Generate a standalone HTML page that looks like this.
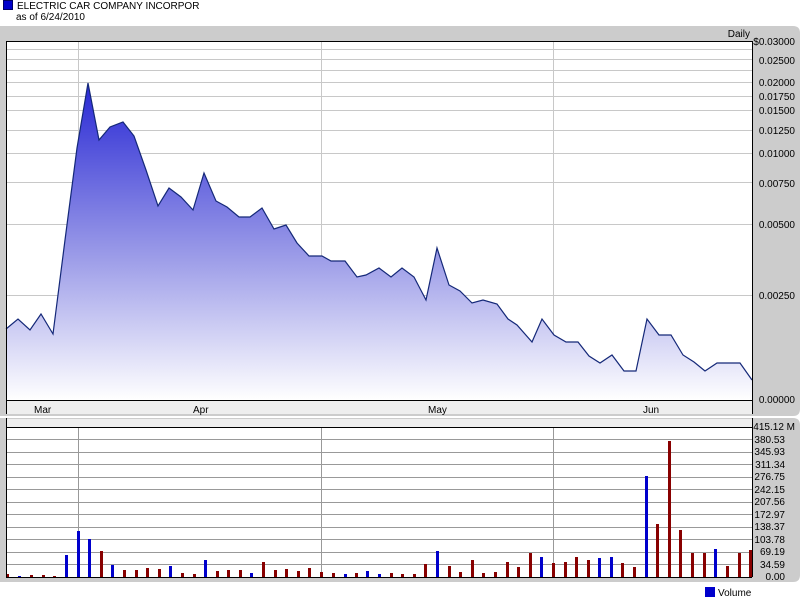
<!DOCTYPE html>
<html><head><meta charset="utf-8"><style>
html,body{margin:0;padding:0;background:#fff;width:800px;height:600px;overflow:hidden}
svg{display:block}
text{font-family:"Liberation Sans",sans-serif;font-size:10px;fill:#000}
</style></head><body>
<svg width="800" height="600" viewBox="0 0 800 600" xmlns="http://www.w3.org/2000/svg">
<defs>
<linearGradient id="g" gradientUnits="userSpaceOnUse" x1="0" y1="83" x2="0" y2="400">
<stop offset="0" stop-color="#2828d4"/>
<stop offset="0.55" stop-color="#9c9ce8"/>
<stop offset="1" stop-color="#ffffff"/>
</linearGradient>
</defs>
<!-- header -->
<rect x="3.5" y="0.5" width="9" height="9" fill="#0000cc" stroke="#000066"/>
<text x="17" y="9">ELECTRIC CAR COMPANY INCORPOR</text>
<text x="16" y="20">as of 6/24/2010</text>
<!-- price panel -->
<path d="M0 26 H793 Q800 26 800 33 V409 Q800 416 793 416 H0 Z" fill="#cccccc"/>
<rect x="6" y="41" width="746" height="359" fill="#fff"/>
<rect x="6" y="401" width="746" height="13" fill="#eeeeee"/>
<g stroke="#c8c8c8" stroke-width="1">
<line x1="6" x2="752" y1="49.5" y2="49.5"/><line x1="6" x2="752" y1="59.5" y2="59.5"/>
<line x1="6" x2="752" y1="70.5" y2="70.5"/><line x1="6" x2="752" y1="82.5" y2="82.5"/>
<line x1="6" x2="752" y1="96.5" y2="96.5"/><line x1="6" x2="752" y1="110.5" y2="110.5"/>
<line x1="6" x2="752" y1="130.5" y2="130.5"/><line x1="6" x2="752" y1="153.5" y2="153.5"/>
<line x1="6" x2="752" y1="182.5" y2="182.5"/><line x1="6" x2="752" y1="224.5" y2="224.5"/>
<line x1="6" x2="752" y1="295.5" y2="295.5"/>
<line x1="78.5" x2="78.5" y1="41" y2="400"/><line x1="321.5" x2="321.5" y1="41" y2="400"/><line x1="553.5" x2="553.5" y1="41" y2="400"/>
</g>
<path d="M6 400 L6 329 L18 319 L30 330 L41 314 L53 334 L65 240 L77 148 L88 83 L99 140 L110 127 L123 122 L134 136 L146 170 L158 206 L169 188 L181 197 L193 210 L204 173 L216 201 L227 207 L239 217 L250 217 L262 208 L274 229 L286 225 L297 243 L309 256 L322 256 L331 261 L345 261 L357 277 L366 275 L379 268 L391 277 L402 268 L414 277 L426 300 L437 248 L449 285 L460 291 L472 303 L483 300 L497 304 L508 319 L517 325 L532 342 L542 319 L554 335 L566 342 L578 342 L589 356 L600 363 L612 355 L624 371 L636 371 L647 319 L659 335 L671 335 L683 355 L694 362 L705 371 L717 363 L740 363 L752 380 L752 400 Z" fill="url(#g)"/>
<polyline fill="none" stroke="#142878" stroke-width="1.2" points="6,329 18,319 30,330 41,314 53,334 65,240 77,148 88,83 99,140 110,127 123,122 134,136 146,170 158,206 169,188 181,197 193,210 204,173 216,201 227,207 239,217 250,217 262,208 274,229 286,225 297,243 309,256 322,256 331,261 345,261 357,277 366,275 379,268 391,277 402,268 414,277 426,300 437,248 449,285 460,291 472,303 483,300 497,304 508,319 517,325 532,342 542,319 554,335 566,342 578,342 589,356 600,363 612,355 624,371 636,371 647,319 659,335 671,335 683,355 694,362 705,371 717,363 740,363 752,380"/>
<path d="M6.5 41 V414 M6 41.5 H752.5 V414 M6 400.5 H752" stroke="#000" fill="none"/>
<text x="750" y="37" text-anchor="end">Daily</text>
<g text-anchor="end">
<text x="795" y="45">$0.03000</text><text x="795" y="64">0.02500</text><text x="795" y="86">0.02000</text>
<text x="795" y="100">0.01750</text><text x="795" y="114">0.01500</text><text x="795" y="134">0.01250</text>
<text x="795" y="157">0.01000</text><text x="795" y="187">0.00750</text><text x="795" y="228">0.00500</text>
<text x="795" y="299">0.00250</text><text x="795" y="403">0.00000</text>
</g>
<text x="34" y="413">Mar</text><text x="193" y="413">Apr</text><text x="428" y="413">May</text><text x="643" y="413">Jun</text>
<!-- volume panel -->
<path d="M0 418 H793 Q800 418 800 425 V575 Q800 582 793 582 H0 Z" fill="#cccccc"/>
<rect x="6" y="419" width="746" height="8" fill="#eeeeee"/>
<rect x="6" y="427" width="746" height="150" fill="#fff"/>
<g stroke="#999" stroke-width="1">
<line x1="6" x2="752" y1="439.5" y2="439.5"/><line x1="6" x2="752" y1="452.5" y2="452.5"/>
<line x1="6" x2="752" y1="464.5" y2="464.5"/><line x1="6" x2="752" y1="477.5" y2="477.5"/>
<line x1="6" x2="752" y1="489.5" y2="489.5"/><line x1="6" x2="752" y1="502.5" y2="502.5"/>
<line x1="6" x2="752" y1="514.5" y2="514.5"/><line x1="6" x2="752" y1="527.5" y2="527.5"/>
<line x1="6" x2="752" y1="539.5" y2="539.5"/><line x1="6" x2="752" y1="552.5" y2="552.5"/>
<line x1="6" x2="752" y1="564.5" y2="564.5"/>
<line x1="78.5" x2="78.5" y1="427" y2="577"/><line x1="321.5" x2="321.5" y1="427" y2="577"/><line x1="553.5" x2="553.5" y1="427" y2="577"/>
</g>
<g fill="#880000">
<rect x="6" y="574" width="3" height="3"/><rect x="30" y="575" width="3" height="2"/><rect x="42" y="575" width="3" height="2"/><rect x="53" y="576" width="3" height="1"/>
<rect x="100" y="551" width="3" height="26"/><rect x="123" y="570" width="3" height="7"/><rect x="135" y="570" width="3" height="7"/><rect x="146" y="568" width="3" height="9"/><rect x="158" y="569" width="3" height="8"/>
<rect x="181" y="573" width="3" height="4"/><rect x="193" y="574" width="3" height="3"/><rect x="216" y="571" width="3" height="6"/><rect x="227" y="570" width="3" height="7"/><rect x="239" y="570" width="3" height="7"/>
<rect x="262" y="562" width="3" height="15"/><rect x="274" y="570" width="3" height="7"/><rect x="285" y="569" width="3" height="8"/><rect x="297" y="571" width="3" height="6"/><rect x="308" y="568" width="3" height="9"/>
<rect x="320" y="572" width="3" height="5"/><rect x="332" y="573" width="3" height="4"/><rect x="355" y="573" width="3" height="4"/><rect x="390" y="573" width="3" height="4"/><rect x="401" y="574" width="3" height="3"/><rect x="413" y="574" width="3" height="3"/>
<rect x="424" y="564" width="3" height="13"/><rect x="448" y="566" width="3" height="11"/><rect x="459" y="572" width="3" height="5"/><rect x="471" y="560" width="3" height="17"/><rect x="482" y="573" width="3" height="4"/>
<rect x="494" y="572" width="3" height="5"/><rect x="506" y="562" width="3" height="15"/><rect x="517" y="567" width="3" height="10"/><rect x="529" y="553" width="3" height="24"/><rect x="552" y="563" width="3" height="14"/>
<rect x="564" y="562" width="3" height="15"/><rect x="575" y="557" width="3" height="20"/><rect x="587" y="560" width="3" height="17"/><rect x="621" y="563" width="3" height="14"/><rect x="633" y="567" width="3" height="10"/>
<rect x="656" y="524" width="3" height="53"/><rect x="668" y="441" width="3" height="136"/><rect x="679" y="530" width="3" height="47"/><rect x="691" y="553" width="3" height="24"/><rect x="703" y="553" width="3" height="24"/>
<rect x="726" y="566" width="3" height="11"/><rect x="738" y="553" width="3" height="24"/><rect x="749" y="550" width="3" height="27"/>
</g>
<g fill="#0000cc">
<rect x="18" y="576" width="3" height="1"/><rect x="65" y="555" width="3" height="22"/><rect x="77" y="531" width="3" height="46"/><rect x="88" y="539" width="3" height="38"/><rect x="111" y="565" width="3" height="12"/>
<rect x="169" y="566" width="3" height="11"/><rect x="204" y="560" width="3" height="17"/><rect x="250" y="573" width="3" height="4"/><rect x="344" y="574" width="3" height="3"/><rect x="366" y="571" width="3" height="6"/><rect x="378" y="574" width="3" height="3"/>
<rect x="436" y="551" width="3" height="26"/><rect x="540" y="557" width="3" height="20"/><rect x="598" y="558" width="3" height="19"/><rect x="610" y="557" width="3" height="20"/><rect x="645" y="476" width="3" height="101"/><rect x="714" y="549" width="3" height="28"/>
</g>
<path d="M6.5 418 V577 M6 427.5 H752.5 M752.5 418 V577 M6 577.5 H752" stroke="#000" fill="none"/>
<g text-anchor="end">
<text x="795" y="430">415.12 M</text><text x="785" y="443">380.53</text><text x="785" y="455">345.93</text><text x="785" y="468">311.34</text>
<text x="785" y="480">276.75</text><text x="785" y="493">242.15</text><text x="785" y="505">207.56</text><text x="785" y="518">172.97</text>
<text x="785" y="530">138.37</text><text x="785" y="543">103.78</text><text x="785" y="555">69.19</text><text x="785" y="568">34.59</text><text x="785" y="580">0.00</text>
</g>
<rect x="705" y="587" width="10" height="10" fill="#0000cc"/>
<text x="718" y="596">Volume</text>
</svg>
</body></html>
